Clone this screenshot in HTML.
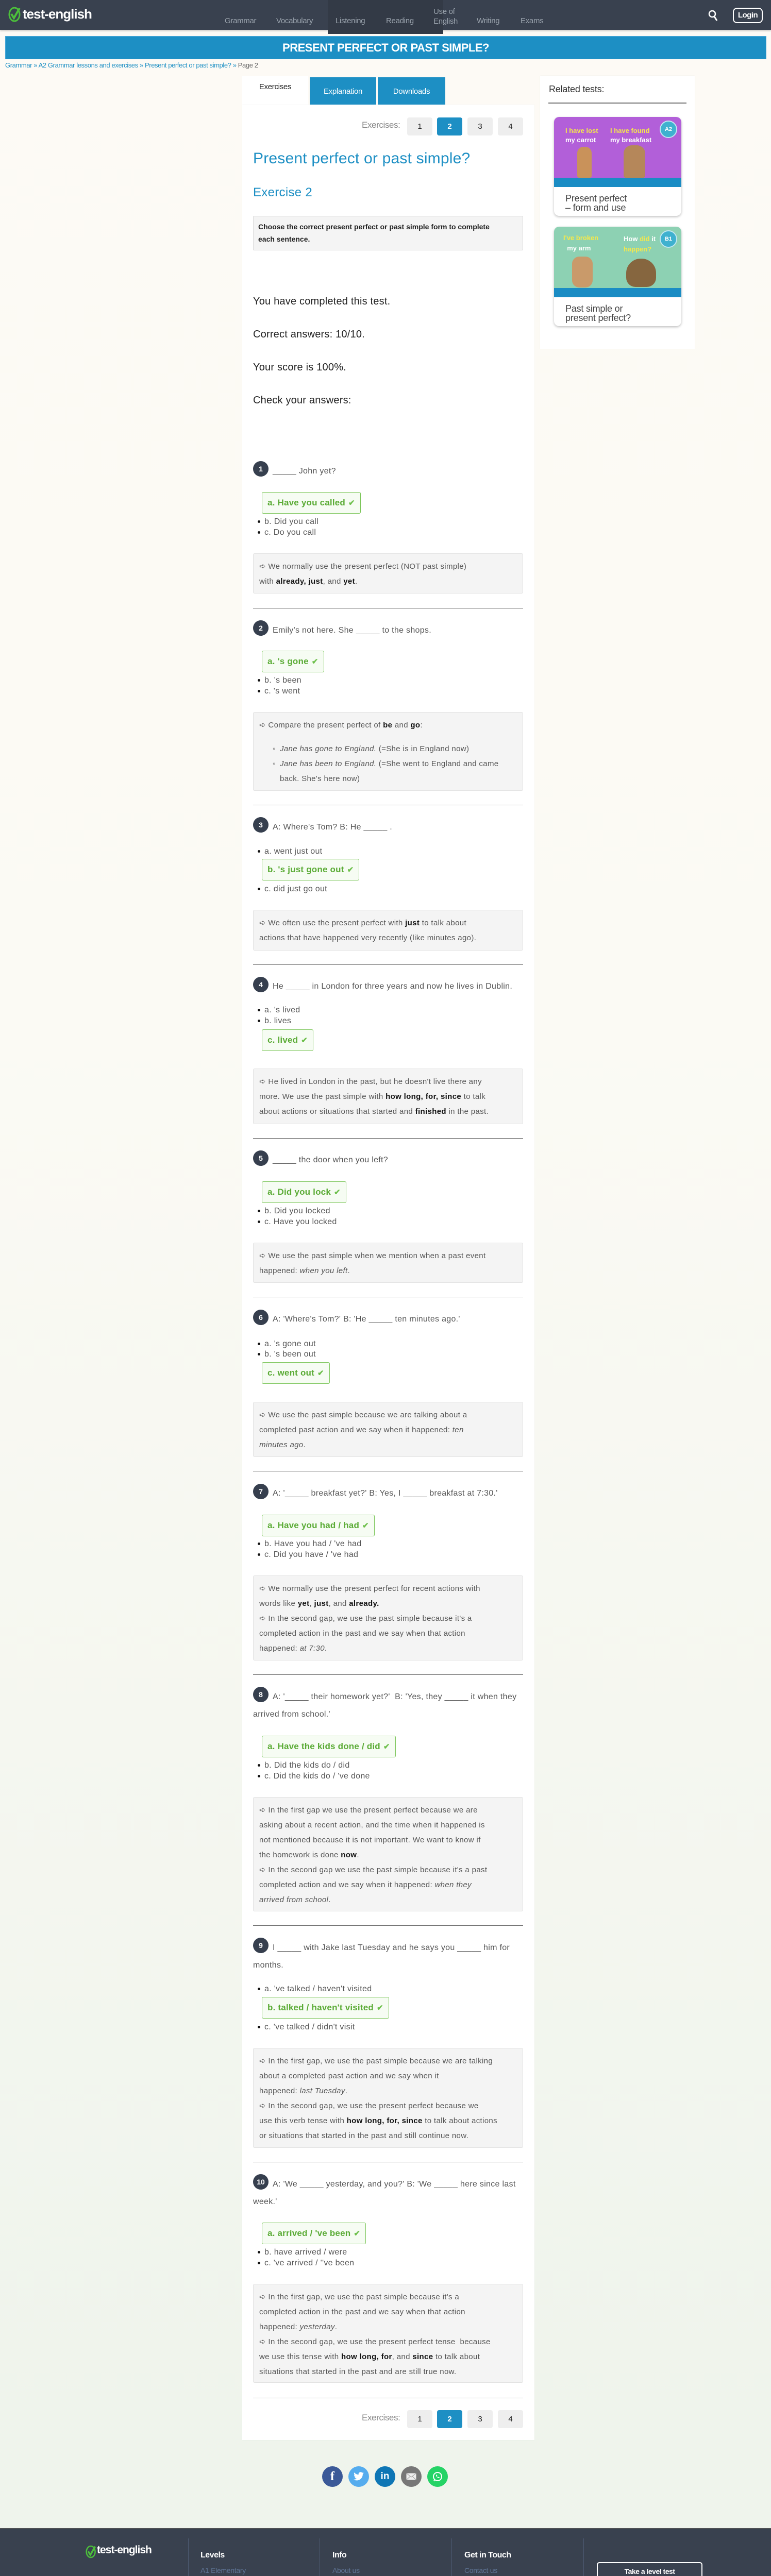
<!DOCTYPE html>
<html><head><meta charset="utf-8">
<style>
*{margin:0;padding:0;box-sizing:border-box}
html{width:1496px;height:5174px;overflow:hidden}
body{width:1496px;height:5174px;position:relative;font-family:"Liberation Sans",Arial,sans-serif;background:linear-gradient(#fdfaf5 0,#fbfaf4 2000px,#eff4ec 4700px,#eff4ec 100%);overflow:hidden;color:#333}
.a{position:absolute}
.hdr{left:0;top:0;width:1496px;height:58px;background:#39414f;box-shadow:0 2px 3px rgba(0,0,0,.2)}
.nav{color:#9aa3ad;font-size:15px;letter-spacing:-.3px}
.ban{left:10px;top:70px;width:1477px;height:45px;background:#1d8fc4;border:1px solid #4aa8d8;color:#fff;font-weight:bold;font-size:22px;text-align:center;line-height:43px;letter-spacing:-.5px}
.panel{left:470px;top:203px;width:567px;height:4533px;background:#fff;box-shadow:0 0 2px rgba(0,0,0,.05)}
.tab{top:150px;height:53px;background:#1d8fc4;color:#fff;font-size:15px;text-align:center;line-height:56px;letter-spacing:-.3px}
.pg{height:35px;width:49px;border-radius:4px;background:#eeeeee;font-size:15px;text-align:center;line-height:35px;color:#222}
.pg.on{background:#1d8fc4;color:#fff;font-weight:bold}
.num{width:30px;height:30px;border-radius:50%;background:#363f4e;color:#fff;font-weight:bold;font-size:14px;text-align:center;line-height:30px;left:491px}
.q{left:491px;width:530px;font-size:16px;color:#555;line-height:34px;text-indent:38px;letter-spacing:.3px}
.ans{left:508px;height:42px;border:1px solid #7cc65a;border-radius:3px;background:#f6fcf3;color:#5aab35;font-weight:bold;font-size:17px;line-height:40px;padding:0 10px 0 10px;white-space:nowrap;letter-spacing:.2px}
.ans span{color:#6cbf4a;font-size:15px;margin-left:6px}
.opt{left:513px;font-size:16px;color:#555;line-height:21px;white-space:nowrap;letter-spacing:.3px}
.opt:before{content:"";position:absolute;left:-13px;top:8px;width:5px;height:5px;border-radius:50%;background:#111}
.ex{left:491px;width:524px;background:#f4f4f4;border:1px solid #e2e2e2;border-radius:3px;padding:10px 8px 10px 11px;font-size:15px;line-height:29px;color:#555;letter-spacing:.35px;white-space:nowrap;overflow:hidden}
.ex b{color:#111}
.hr{left:491px;width:524px;height:1px;background:#666}
.big{left:491px;font-size:20px;color:#222;letter-spacing:.2px}
.flk{color:#5f7596;font-size:14px;letter-spacing:-.3px}
.fh{color:#fff;font-weight:bold;font-size:16px;letter-spacing:-.5px}
.soc{width:40px;height:40px;border-radius:50%;top:4787px;color:#fff;font-weight:bold;text-align:center;line-height:40px;font-size:20px}
.card{left:1075px;width:247px;background:#fff;border-radius:10px;box-shadow:0 2px 5px rgba(0,0,0,.25);overflow:hidden}
.ctext{font-size:18px;color:#444;line-height:18px;padding-left:22px;letter-spacing:-.2px}
</style></head><body>

<div class="a hdr"></div>
<div class="a" style="left:636px;top:0;width:224px;height:66px;background:#333a46"></div>
<svg class="a" style="left:16px;top:13px" width="26" height="30" viewBox="0 0 26 30"><ellipse cx="12" cy="15" rx="10" ry="13" fill="none" stroke="#4cbf3b" stroke-width="3"/><path d="M6 14 L11 22 L22 3" fill="none" stroke="#4cbf3b" stroke-width="4"/></svg>
<div class="a" style="left:44px;top:12px;color:#fff;font-weight:bold;font-size:26px;letter-spacing:-1px">test-english</div>
<div class="a nav" style="left:436px;top:32px">Grammar</div>
<div class="a nav" style="left:536px;top:32px">Vocabulary</div>
<div class="a nav" style="left:651px;top:32px">Listening</div>
<div class="a nav" style="left:749px;top:32px">Reading</div>
<div class="a nav" style="left:841px;top:13px;line-height:19px">Use of<br>English</div>
<div class="a nav" style="left:925px;top:32px">Writing</div>
<div class="a nav" style="left:1010px;top:32px">Exams</div>
<svg class="a" style="left:1374px;top:18px" width="20" height="24" viewBox="0 0 20 24"><circle cx="8" cy="9" r="6" fill="none" stroke="#fff" stroke-width="2.5"/><path d="M12 14 L17 22" stroke="#fff" stroke-width="3"/></svg>
<div class="a" style="left:1422px;top:15px;width:58px;height:30px;border:2px solid #fff;border-radius:8px;color:#fff;font-size:15px;text-align:center;line-height:26px;font-weight:bold;letter-spacing:-.5px">Login</div>

<div class="a ban">PRESENT PERFECT OR PAST SIMPLE?</div>
<div class="a" style="left:10px;top:119px;font-size:13px;color:#1d8fc4;letter-spacing:-.4px">Grammar » A2 Grammar lessons and exercises » Present perfect or past simple? » <span style="color:#666">Page 2</span></div>

<div class="a" style="left:470px;top:147px;width:128px;height:60px;background:#fff"></div>
<div class="a" style="left:470px;top:160px;width:128px;text-align:center;font-size:15px;color:#222;letter-spacing:-.3px">Exercises</div>
<div class="a tab" style="left:601px;width:129px">Explanation</div>
<div class="a tab" style="left:733px;width:131px">Downloads</div>
<div class="a panel"></div>

<div class="a" style="left:1048px;top:147px;width:300px;height:530px;background:#fff;box-shadow:0 0 2px rgba(0,0,0,.06)"></div>
<div class="a" style="left:1065px;top:163px;font-size:18px;color:#333;letter-spacing:-.2px">Related tests:</div>
<div class="a" style="left:1064px;top:199px;width:268px;height:2px;background:#777"></div>
<div class="a card" style="top:227px;height:192px">
 <div style="height:136px;background:#b25fd9;position:relative">
  <div style="position:absolute;left:22px;top:18px;color:#fff;font-weight:bold;font-size:13px;line-height:18px"><span style="color:#f5e84a">I have lost</span><br>my carrot</div>
  <div style="position:absolute;left:109px;top:18px;color:#fff;font-weight:bold;font-size:13px;line-height:18px"><span style="color:#f5e84a">I have found</span><br>my breakfast</div>
  <div style="position:absolute;left:205px;top:7px;width:34px;height:34px;border-radius:50%;background:#3fb1cf;border:2px solid #bfe6f1;color:#fff;font-size:11px;text-align:center;line-height:30px;font-weight:bold">A2</div>
  <div style="position:absolute;left:45px;top:58px;width:28px;height:60px;background:#c9925a;border-radius:12px 12px 4px 4px"></div>
  <div style="position:absolute;left:135px;top:55px;width:42px;height:63px;background:#b5875a;border-radius:16px 16px 4px 4px"></div>
  <div style="position:absolute;left:0;top:118px;width:247px;height:18px;background:#1a8cc4"></div>
 </div>
 <div class="ctext" style="padding-top:13px">Present perfect<br>– form and use</div>
</div>
<div class="a card" style="top:440px;height:193px">
 <div style="height:137px;background:#8dd1b3;position:relative">
  <div style="position:absolute;left:18px;top:12px;color:#fff;font-weight:bold;font-size:13px;line-height:20px"><span style="color:#f5e84a">I've broken</span><br>&nbsp;&nbsp;my arm</div>
  <div style="position:absolute;left:135px;top:14px;color:#fff;font-weight:bold;font-size:13px;line-height:20px">How <span style="color:#f5e84a">did</span> it<br><span style="color:#f5e84a">happen?</span></div>
  <div style="position:absolute;left:205px;top:7px;width:34px;height:34px;border-radius:50%;background:#3fb1cf;border:2px solid #bfe6f1;color:#fff;font-size:11px;text-align:center;line-height:30px;font-weight:bold">B1</div>
  <div style="position:absolute;left:35px;top:58px;width:40px;height:60px;background:#c99a6a;border-radius:14px"></div>
  <div style="position:absolute;left:140px;top:62px;width:58px;height:55px;background:#86663f;border-radius:28px 28px 18px 18px"></div>
  <div style="position:absolute;left:0;top:119px;width:247px;height:18px;background:#1a8cc4"></div>
 </div>
 <div class="ctext" style="padding-top:13px">Past simple or<br>present perfect?</div>
</div>

<div class="a" style="left:702px;top:233px;font-size:17px;color:#888;letter-spacing:-.4px">Exercises:</div>
<div class="a pg" style="left:790px;top:228px">1</div>
<div class="a pg on" style="left:848px;top:228px">2</div>
<div class="a pg" style="left:907px;top:228px">3</div>
<div class="a pg" style="left:966px;top:228px">4</div>

<div class="a" style="left:491px;top:291px;font-size:30px;color:#1d8fc4;letter-spacing:.2px">Present perfect or past simple?</div>
<div class="a" style="left:491px;top:360px;font-size:24px;color:#1d8fc4;letter-spacing:.3px">Exercise 2</div>
<div class="a" style="left:491px;top:419px;width:524px;height:67px;background:#f4f4f4;border:1px solid #dcdcdc;border-radius:2px;padding:8px 9px;font-weight:bold;font-size:14px;line-height:24px;color:#222">Choose the correct present perfect or past simple form to complete<br>each sentence.</div>

<div class="a big" style="top:574px">You have completed this test.</div>
<div class="a big" style="top:638px">Correct answers: 10/10.</div>
<div class="a big" style="top:702px">Your score is 100%.</div>
<div class="a big" style="top:766px">Check your answers:</div>

<div class="a num" style="top:895px">1</div>
<div class="a q" style="top:898px">_____ John yet?</div>
<div class="a ans" style="top:955px">a. Have you called<span>✔</span></div>
<div class="a opt" style="top:1002px">b. Did you call</div>
<div class="a opt" style="top:1023px">c. Do you call</div>
<div class="a ex" style="top:1074px;height:78px">➪ We normally use the present perfect (NOT past simple)<br>with <b>already, just</b>, and <b>yet</b>.</div>
<div class="a hr" style="top:1180px"></div>

<div class="a num" style="top:1204px">2</div>
<div class="a q" style="top:1207px">Emily's not here. She _____ to the shops.</div>
<div class="a ans" style="top:1263px">a. 's gone<span>✔</span></div>
<div class="a opt" style="top:1310px">b. 's been</div>
<div class="a opt" style="top:1331px">c. 's went</div>
<div class="a ex" style="top:1382px;height:153px">➪ Compare the present perfect of <b>be</b> and <b>go</b>:
<div style="position:relative;padding-left:40px;margin-top:17px"><span style="position:absolute;left:26px;top:0">◦</span><i>Jane has gone to England.</i> (=She is in England now)<br><span style="position:absolute;left:26px;top:29px">◦</span><i>Jane has been to England.</i> (=She went to England and came<br>back. She's here now)</div></div>
<div class="a hr" style="top:1562px"></div>

<div class="a num" style="top:1586px">3</div>
<div class="a q" style="top:1589px">A: Where's Tom? B: He _____ .</div>
<div class="a opt" style="top:1642px">a. went just out</div>
<div class="a ans" style="top:1667px">b. 's just gone out<span>✔</span></div>
<div class="a opt" style="top:1715px">c. did just go out</div>
<div class="a ex" style="top:1766px;height:79px">➪ We often use the present perfect with <b>just</b> to talk about<br>actions that have happened very recently (like minutes ago).</div>
<div class="a hr" style="top:1872px"></div>

<div class="a num" style="top:1896px">4</div>
<div class="a q" style="top:1898px">He _____ in London for three years and now he lives in Dublin.</div>
<div class="a opt" style="top:1950px">a. 's lived</div>
<div class="a opt" style="top:1971px">b. lives</div>
<div class="a ans" style="top:1998px">c. lived<span>✔</span></div>
<div class="a ex" style="top:2074px;height:108px">➪ He lived in London in the past, but he doesn't live there any<br>more. We use the past simple with <b>how long, for, since</b> to talk<br>about actions or situations that started and <b>finished</b> in the past.</div>
<div class="a hr" style="top:2209px"></div>

<div class="a num" style="top:2233px">5</div>
<div class="a q" style="top:2235px">_____ the door when you left?</div>
<div class="a ans" style="top:2293px">a. Did you lock<span>✔</span></div>
<div class="a opt" style="top:2340px">b. Did you locked</div>
<div class="a opt" style="top:2361px">c. Have you locked</div>
<div class="a ex" style="top:2412px;height:78px">➪ We use the past simple when we mention when a past event<br>happened: <i>when you left</i>.</div>
<div class="a hr" style="top:2517px"></div>

<div class="a num" style="top:2542px">6</div>
<div class="a q" style="top:2544px">A: 'Where's Tom?' B: 'He _____ ten minutes ago.'</div>
<div class="a opt" style="top:2598px">a. 's gone out</div>
<div class="a opt" style="top:2618px">b. 's been out</div>
<div class="a ans" style="top:2644px">c. went out<span>✔</span></div>
<div class="a ex" style="top:2721px;height:107px">➪ We use the past simple because we are talking about a<br>completed past action and we say when it happened: <i>ten<br>minutes ago</i>.</div>
<div class="a hr" style="top:2855px"></div>

<div class="a num" style="top:2880px">7</div>
<div class="a q" style="top:2882px">A: '_____ breakfast yet?' B: Yes, I _____ breakfast at 7:30.'</div>
<div class="a ans" style="top:2940px">a. Have you had / had<span>✔</span></div>
<div class="a opt" style="top:2986px">b. Have you had / 've had</div>
<div class="a opt" style="top:3007px">c. Did you have / 've had</div>
<div class="a ex" style="top:3058px;height:165px">➪ We normally use the present perfect for recent actions with<br>words like <b>yet</b>, <b>just</b>, and <b>already.</b><br>➪ In the second gap, we use the past simple because it's a<br>completed action in the past and we say when that action<br>happened: <i>at 7:30</i>.</div>
<div class="a hr" style="top:3250px"></div>

<div class="a num" style="top:3274px">8</div>
<div class="a q" style="top:3277px">A: '_____ their homework yet?'&nbsp; B: 'Yes, they _____ it when they arrived from school.'</div>
<div class="a ans" style="top:3369px">a. Have the kids done / did<span>✔</span></div>
<div class="a opt" style="top:3416px">b. Did the kids do / did</div>
<div class="a opt" style="top:3437px">c. Did the kids do / 've done</div>
<div class="a ex" style="top:3488px;height:222px">➪ In the first gap we use the present perfect because we are<br>asking about a recent action, and the time when it happened is<br>not mentioned because it is not important. We want to know if<br>the homework is done <b>now</b>.<br>➪ In the second gap we use the past simple because it's a past<br>completed action and we say when it happened: <i>when they<br>arrived from school</i>.</div>
<div class="a hr" style="top:3737px"></div>

<div class="a num" style="top:3761px">9</div>
<div class="a q" style="top:3764px">I _____ with Jake last Tuesday and he says you _____ him for months.</div>
<div class="a opt" style="top:3850px">a. 've talked / haven't visited</div>
<div class="a ans" style="top:3876px">b. talked / haven't visited<span>✔</span></div>
<div class="a opt" style="top:3924px">c. 've talked / didn't visit</div>
<div class="a ex" style="top:3975px;height:194px">➪ In the first gap, we use the past simple because we are talking<br>about a completed past action and we say when it<br>happened: <i>last Tuesday</i>.<br>➪ In the second gap, we use the present perfect because we<br>use this verb tense with <b>how long, for, since</b> to talk about actions<br>or situations that started in the past and still continue now.</div>
<div class="a hr" style="top:4196px"></div>

<div class="a num" style="top:4220px">10</div>
<div class="a q" style="top:4223px">A: 'We _____ yesterday, and you?' B: 'We _____ here since last week.'</div>
<div class="a ans" style="top:4314px">a. arrived / 've been<span>✔</span></div>
<div class="a opt" style="top:4361px">b. have arrived / were</div>
<div class="a opt" style="top:4382px">c. 've arrived / ''ve been</div>
<div class="a ex" style="top:4433px;height:192px">➪ In the first gap, we use the past simple because it's a<br>completed action in the past and we say when that action<br>happened: <i>yesterday</i>.<br>➪ In the second gap, we use the present perfect tense&nbsp; because<br>we use this tense with <b>how long, for</b>, and <b>since</b> to talk about<br>situations that started in the past and are still true now.</div>
<div class="a hr" style="top:4654px"></div>

<div class="a" style="left:702px;top:4683px;font-size:17px;color:#888;letter-spacing:-.4px">Exercises:</div>
<div class="a pg" style="left:790px;top:4678px">1</div>
<div class="a pg on" style="left:848px;top:4678px">2</div>
<div class="a pg" style="left:907px;top:4678px">3</div>
<div class="a pg" style="left:966px;top:4678px">4</div>

<div class="a soc" style="left:625px;background:#3b5998;font-family:'Liberation Serif',serif;font-size:24px">f</div>
<div class="a soc" style="left:676px;background:#55acee">
<svg width="22" height="18" viewBox="0 0 24 20" style="margin-top:11px"><path d="M23 2.5c-.8.4-1.7.6-2.6.7.9-.6 1.6-1.4 2-2.5-.9.5-1.900.9-2.9 1.1A4.5 4.5 0 0 0 11.8 5.9 12.8 12.8 0 0 1 2.5 1.2a4.5 4.5 0 0 0 1.4 6 4.5 4.5 0 0 1-2-.6v.1a4.5 4.5 0 0 0 3.6 4.4 4.5 4.5 0 0 1-2 .1 4.5 4.5 0 0 0 4.2 3.1A9 9 0 0 1 1 16.2 12.8 12.8 0 0 0 7.9 18.2c8.3 0 12.8-6.9 12.8-12.8v-.6c.9-.6 1.6-1.4 2.3-2.3z" fill="#fff"/></svg></div>
<div class="a soc" style="left:727px;background:#0e76b5;font-size:19px">in</div>
<div class="a soc" style="left:778px;background:#777"><svg width="20" height="14" viewBox="0 0 20 14" style="margin-top:13px"><rect x=".5" y=".5" width="19" height="13" fill="#eee"/><path d="M.5 .5L10 8 19.5 .5M.5 13.5L8 6.5M19.5 13.5L12 6.5" stroke="#999" fill="none"/></svg></div>
<div class="a soc" style="left:829px;background:#25d366"><svg width="22" height="22" viewBox="0 0 22 22" style="margin-top:9px"><circle cx="11" cy="11" r="8" fill="none" stroke="#fff" stroke-width="2"/><path d="M4 20l1.5-4" stroke="#fff" stroke-width="2"/><path d="M8 8c0 3 3 6 6 6l1-1.5-2-1-1 1c-1-.5-2-1.5-2.5-2.5l1-1-1-2z" fill="#fff"/></svg></div>

<div class="a" style="left:0;top:4907px;width:1496px;height:267px;background:#39414f;border-top:1px solid #555"></div>
<svg class="a" style="left:166px;top:4940px" width="22" height="26" viewBox="0 0 26 30"><ellipse cx="12" cy="15" rx="10" ry="13" fill="none" stroke="#4cbf3b" stroke-width="3"/><path d="M6 14 L11 22 L22 3" fill="none" stroke="#4cbf3b" stroke-width="4"/></svg>
<div class="a" style="left:188px;top:4938px;color:#fff;font-weight:bold;font-size:21px;letter-spacing:-1px">test-english</div>
<div class="a" style="left:171px;top:5025px;color:#fff;font-size:12px;letter-spacing:-.5px">© Copyright 2016-2023</div>
<div class="a" style="left:171px;top:5045px;color:#fff;font-size:14px;letter-spacing:-.6px">test-english.com</div>
<div class="a" style="left:171px;top:5066px;color:#fff;font-size:13px;letter-spacing:-.6px">All rights reserved.</div>
<div class="a" style="left:171px;top:5104px;color:#fff;font-size:13px;letter-spacing:-.6px">Made at</div>
<div class="a" style="left:171px;top:5125px;color:#fff;font-size:14px;letter-spacing:-.6px">illadelsbous.com</div>
<div class="a" style="left:365px;top:4927px;width:1px;height:216px;background:#4d5a72"></div>
<div class="a" style="left:620px;top:4927px;width:1px;height:216px;background:#4d5a72"></div>
<div class="a" style="left:876px;top:4927px;width:1px;height:216px;background:#4d5a72"></div>
<div class="a" style="left:1132px;top:4927px;width:1px;height:216px;background:#4d5a72"></div>
<div class="a fh" style="left:389px;top:4951px">Levels</div>
<div class="a fh" style="left:645px;top:4951px">Info</div>
<div class="a fh" style="left:901px;top:4951px">Get in Touch</div>
<div class="a flk" style="left:389px;top:4981px">A1 Elementary</div>
<div class="a flk" style="left:389px;top:5011px">A2 Pre-intermediate</div>
<div class="a flk" style="left:389px;top:5042px">B1 Intermediate</div>
<div class="a flk" style="left:389px;top:5073px">B1 Upper-intermediate</div>
<div class="a flk" style="left:389px;top:5104px">B2 Pre-advanced</div>
<div class="a flk" style="left:645px;top:4981px">About us</div>
<div class="a flk" style="left:645px;top:5011px">Terms of Use</div>
<div class="a flk" style="left:645px;top:5042px">Privacy Policy</div>
<div class="a flk" style="left:645px;top:5073px">Cookie Policy</div>
<div class="a flk" style="left:645px;top:5104px">Cookie Declaration</div>
<div class="a flk" style="left:901px;top:4981px">Contact us</div>
<div class="a flk" style="left:901px;top:5011px">Request a topic for a lesson</div>
<svg class="a" style="left:906px;top:5070px" width="18" height="18" viewBox="0 0 18 18"><rect x="1.5" y="1.5" width="15" height="15" rx="4" fill="none" stroke="#fff" stroke-width="2"/><circle cx="9" cy="9" r="3.5" fill="none" stroke="#fff" stroke-width="2"/></svg>
<div class="a" style="left:961px;top:5066px;color:#fff;font-weight:bold;font-size:20px;font-family:'Liberation Serif',serif">f</div>
<svg class="a" style="left:1010px;top:5071px" width="18" height="16" viewBox="0 0 24 20"><path d="M23 2.5c-.8.4-1.7.6-2.6.7.9-.6 1.6-1.4 2-2.5-.9.5-1.9.9-2.9 1.1A4.5 4.5 0 0 0 11.8 5.9 12.8 12.8 0 0 1 2.5 1.2a4.5 4.5 0 0 0 1.4 6 4.5 4.5 0 0 1-2-.6v.1a4.5 4.5 0 0 0 3.6 4.4 4.5 4.5 0 0 1-2 .1 4.5 4.5 0 0 0 4.2 3.1A9 9 0 0 1 1 16.2 12.8 12.8 0 0 0 7.9 18.2c8.3 0 12.8-6.9 12.8-12.8v-.6c.9-.6 1.6-1.4 2.3-2.3z" fill="#fff"/></svg>
<svg class="a" style="left:1063px;top:5072px" width="18" height="14" viewBox="0 0 18 14"><rect width="18" height="14" rx="3" fill="#fff"/><path d="M7 4l5 3-5 3z" fill="#39414f"/></svg>
<div class="a" style="left:1158px;top:4973px;width:205px;height:36px;border:2px solid #fff;border-radius:5px;color:#fff;font-weight:bold;font-size:14px;text-align:center;line-height:32px;letter-spacing:-.5px">Take a level test</div>
<div class="a" style="left:1158px;top:5030px;width:205px;height:36px;border:2px solid #fff;border-radius:5px;color:#fff;font-weight:bold;font-size:14px;text-align:center;line-height:32px;letter-spacing:-.5px">Upgrade to pro</div>
</body></html>
